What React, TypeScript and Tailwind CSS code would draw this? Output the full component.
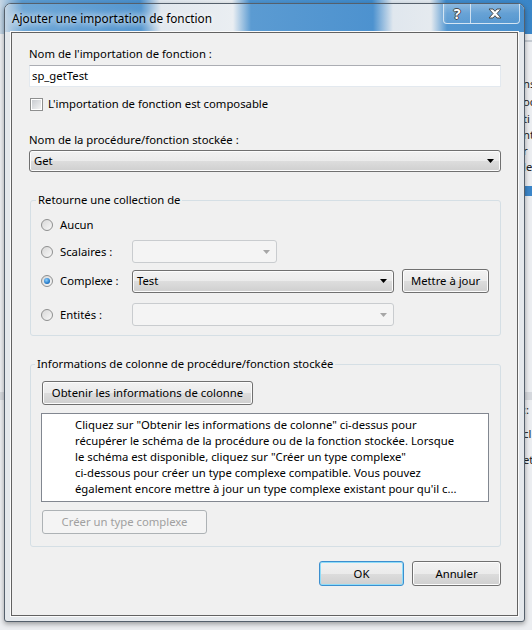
import type { ReactNode } from "react";

const btnFace =
  "bg-[linear-gradient(#f2f2f2,#ebebeb_50%,#dddddd_50%,#cfcfcf)] shadow-[inset_0_0_0_1px_#fcfcfc]";

function Arrow({ disabled }: { disabled?: boolean }) {
  return (
    <svg width="7" height="4" viewBox="0 0 7 4" className="shrink-0">
      <path d="M0 0h7L3.5 4z" fill={disabled ? "#a6a6a6" : "#000"} />
    </svg>
  );
}

function Combo({
  value,
  disabled,
  className = "",
}: {
  value?: string;
  disabled?: boolean;
  className?: string;
}) {
  return (
    <div
      className={`flex items-center justify-between rounded-[3px] border pl-[4px] pr-[6px] ${
        disabled ? "border-[#c9cccf] bg-[#f4f4f4]" : `border-[#707070] ${btnFace}`
      } ${className}`}
    >
      <span>{value}</span>
      <Arrow disabled={disabled} />
    </div>
  );
}

function Button({
  children,
  className = "",
  variant = "normal",
}: {
  children: ReactNode;
  className?: string;
  variant?: "normal" | "default" | "disabled";
}) {
  const look =
    variant === "disabled"
      ? "border-[#adb2b5] bg-[#f4f4f4] text-[#a0a0a0]"
      : variant === "default"
        ? "border-[#3c8fcf] bg-[linear-gradient(#f2f2f2,#ebebeb_50%,#dddddd_50%,#cfcfcf)] shadow-[inset_0_0_0_1px_#8fdcf8]"
        : `border-[#707070] ${btnFace}`;
  return (
    <div className={`flex items-center justify-center rounded-[3px] border ${look} ${className}`}>
      {children}
    </div>
  );
}

function Radio({ checked }: { checked?: boolean }) {
  return (
    <div className="flex size-[12px] shrink-0 items-center justify-center rounded-full border border-[#8e8f8f] bg-[linear-gradient(135deg,#d8d8d8,#f8f8f8)]">
      {checked && (
        <div className="size-[6px] rounded-full bg-[radial-gradient(circle_at_40%_35%,#8cd1ff,#1a6fc0_70%,#0e4f95)]" />
      )}
    </div>
  );
}

function RadioRow({
  label,
  checked,
  children,
  className = "",
}: {
  label: string;
  checked?: boolean;
  children?: ReactNode;
  className?: string;
}) {
  return (
    <div className={`flex items-center ${className}`}>
      <Radio checked={checked} />
      <span className="ml-[7px] w-[72px]">{label}</span>
      {children}
    </div>
  );
}

const lines = [
  'Cliquez sur "Obtenir les informations de colonne" ci-dessus pour',
  "récupérer le schéma de la procédure ou de la fonction stockée. Lorsque",
  'le schéma est disponible, cliquez sur "Créer un type complexe"',
  "ci-dessous pour créer un type complexe compatible. Vous pouvez",
  "également encore mettre à jour un type complexe existant pour qu'il c...",
];

const sideText = [
  { t: "ns", y: 76 },
  { t: "oc", y: 94 },
  { t: "ti", y: 111 },
  { t: "nt", y: 127 },
  { t: "r", y: 143 },
  { t: "le", y: 159 },
  { t: "::", y: 402 },
  { t: "cl", y: 426 },
  { t: "et", y: 452 },
];

export default function App() {
  return (
    <div className="relative h-[630px] w-[532px] overflow-hidden bg-[#eceef1] [font-family:'Noto_Sans',sans-serif] text-[11.3px] leading-[16px] text-black">
      {/* desktop behind the dialog */}
      <div className="absolute inset-x-0 top-0 h-[34px] bg-[linear-gradient(to_right,#c7d6e4_0px,#5b9bd1_22px,#4a8fcc_140px,#dfe6ed_160px,#e9edf1_232px,#4c92cf_250px,#3e89ca_372px,#dde5ed_392px,#e2e8ee_430px,#3f8acb_446px,#3a86c8_532px)]" />
      <div className="absolute right-0 top-[40px] h-[2px] w-[10px] bg-[#c5cbd2]" />
      <div className="absolute right-0 top-[186px] h-[10px] w-[10px] bg-[#3b86c9]" />
      <div className="absolute inset-x-0 top-[392px] h-[8px] bg-[#d6d9de]" />
      {sideText.map((s) => (
        <span key={s.y} className="absolute left-[523px] text-[#222]" style={{ top: s.y }}>
          {s.t}
        </span>
      ))}

      {/* dialog window */}
      <div className="relative z-10 ml-[4px] mt-[3px] flex w-[521px] flex-col rounded-t-[7px] rounded-b-[3px] border border-[#55606c] bg-[#e4e8ec] shadow-[0_2px_5px_rgba(0,0,0,0.35)]">
        <div className="flex h-[28px] items-start justify-between rounded-t-[6px] bg-[linear-gradient(to_right,#c6d6e5_0px,#6ea7d7_18px,#5597d0_136px,#e2e8ee_156px,#eaeef2_228px,#5b9bd2_246px,#4d92cf_368px,#e0e7ee_388px,#e5eaef_426px,#5497d1_442px,#4a90cd_521px)]">
          <span className="ml-[7px] mt-[6px] text-[11.8px] [text-shadow:0_0_6px_#fff,0_0_8px_#fff]">
            Ajouter une importation de fonction
          </span>
          <div className="mr-[4px] flex h-[20px] overflow-hidden rounded-b-[4px] border border-t-0 border-[#e8f0f8]/80 bg-[linear-gradient(#ffffff55,#ffffff22_50%,#ffffff10)]">
            <div className="flex w-[27px] items-center justify-center border-r border-[#e8f0f8]/80 text-[14px] font-bold leading-none text-white [text-shadow:1px_0_#4a4a4a,-1px_0_#4a4a4a,0_1px_#4a4a4a,0_-1px_#4a4a4a]">
              ?
            </div>
            <div className="flex w-[48px] items-center justify-center">
              <svg width="14" height="11" viewBox="0 0 14 11">
                <path
                  d="M1 1h4l2 2.3L9 1h4L9 5.5l4 4.5H9L7 7.7 5 10H1l4-4.5z"
                  fill="#fff"
                  stroke="#4a4a4a"
                  strokeWidth="1"
                  strokeLinejoin="round"
                />
              </svg>
            </div>
          </div>
        </div>

        {/* client area */}
        <div className="mx-[6px] mb-[5px] flex flex-col border border-[#626262] bg-[#f0f0f0] pl-[17px] pr-[16px] shadow-[0_0_0_1px_#fbfbfb]">
          <div className="mt-[13px]">Nom de l'importation de fonction :</div>
          <div className="mt-[3px] flex h-[22px] items-center border border-[#e3e9ef] border-t-[#abadb3] bg-white pl-[2px]">
            sp_getTest
          </div>
          <div className="mt-[9px] flex items-center">
            <div className="ml-[1px] flex size-[13px] items-center justify-center border border-[#8e8f8f] bg-white">
              <div className="size-[9px] bg-[linear-gradient(135deg,#c9ccd1,#f3f3f3)]" />
            </div>
            <span className="ml-[5px]">L'importation de fonction est composable</span>
          </div>
          <div className="mt-[20px]">Nom de la procédure/fonction stockée :</div>
          <Combo value="Get" className="mt-[2px] h-[22px]" />

          <fieldset className="ml-[1px] mt-[20px] rounded-[3px] border border-[#d5dfe5]">
            <legend className="ml-[5px] px-[2px]">Retourne une collection de</legend>
            <div className="pb-[9px] pl-[10px] pt-[9px]">
              <RadioRow label="Aucun" className="h-[16px]" />
              <RadioRow label="Scalaires :" className="mt-[7px]">
                <Combo disabled className="h-[23px] w-[145px]" />
              </RadioRow>
              <RadioRow label="Complexe :" checked className="mt-[6px] h-[24px]">
                <Combo value="Test" className="h-[23px] w-[262px]" />
                <Button className="ml-[8px] h-[24px] w-[87px]">Mettre à jour</Button>
              </RadioRow>
              <RadioRow label="Entités :" className="mt-[10px]">
                <Combo disabled className="h-[23px] w-[262px]" />
              </RadioRow>
            </div>
          </fieldset>

          <fieldset className="ml-[1px] mt-[20px] rounded-[3px] border border-[#d5dfe5]">
            <legend className="ml-[4px] px-[2px]">
              Informations de colonne de procédure/fonction stockée
            </legend>
            <div className="pb-[12px] pl-[11px] pt-[9px]">
              <Button className="h-[24px] w-[211px]">Obtenir les informations de colonne</Button>
              <div className="-ml-[1px] mt-[8px] h-[89px] w-[448px] border border-[#828790] bg-white pl-[33px] pt-[3px]">
                {lines.map((l) => (
                  <div key={l} className="whitespace-nowrap">
                    {l}
                  </div>
                ))}
              </div>
              <Button variant="disabled" className="mt-[8px] h-[24px] w-[165px]">
                Créer un type complexe
              </Button>
            </div>
          </fieldset>

          <div className="mb-[29px] mt-[14px] flex justify-end gap-[8px]">
            <Button variant="default" className="h-[25px] w-[85px]">
              OK
            </Button>
            <Button className="h-[25px] w-[89px]">Annuler</Button>
          </div>
        </div>
      </div>
    </div>
  );
}
